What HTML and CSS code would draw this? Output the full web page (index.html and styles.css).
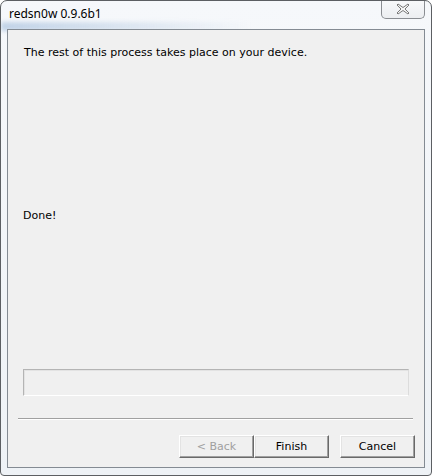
FILE: index.html
```html
<!DOCTYPE html>
<html>
<head>
<meta charset="utf-8">
<link rel="stylesheet" href="styles.css">
</head>
<body>
<div class="window">
  <div class="titlebar">
    <span class="title">redsn0w 0.9.6b1</span>
    <div class="close">
      <svg width="14" height="12" viewBox="0 0 14 12">
        <path d="M2 1 L7 4.5 L12 1 L13 2 L9 6 L13 10 L12 11 L7 7.5 L2 11 L1 10 L5 6 L1 2 Z" fill="#f4f4f4" stroke="#7a7a7a" stroke-width="1" stroke-linejoin="round"/>
      </svg>
    </div>
  </div>
  <div class="client">
    <p class="msg">The rest of this process takes place on your device.</p>
    <p class="done">Done!</p>
    <div class="progress"></div>
    <div class="sep"></div>
    <div class="buttons">
      <button class="btn disabled">&lt; Back</button>
      <button class="btn">Finish</button>
      <button class="btn cancel">Cancel</button>
    </div>
  </div>
</div>
</body>
</html>
```

FILE: styles.css
```css
html, body {
  margin: 0;
  padding: 0;
  background: #ffffff;
}
.window {
  width: 432px;
  height: 476px;
  box-sizing: border-box;
  border: 1px solid #5c5f63;
  border-radius: 7px 7px 4px 4px;
  background: linear-gradient(180deg, #f6f8fb 0%, #eef2f6 100%);
  display: flex;
  flex-direction: column;
  position: relative;
  overflow: hidden;
}
.window::before {
  content: "";
  position: absolute;
  left: 0;
  top: 21px;
  width: 250px;
  height: 9px;
  background: linear-gradient(90deg, rgba(150,180,215,0.55), rgba(170,195,225,0.0));
  filter: blur(2px);
}
.titlebar {
  height: 28px;
  display: flex;
  align-items: flex-start;
  position: relative;
}
.title {
  font-family: "Noto Sans", "Open Sans", sans-serif;
  font-size: 12px;
  color: #000;
  margin: 5px 0 0 8px;
  line-height: 16px;
}
.close {
  position: absolute;
  right: 6px;
  top: -1px;
  width: 44px;
  height: 19px;
  box-sizing: border-box;
  border: 1px solid #8a8d92;
  border-top: none;
  border-radius: 0 0 5px 5px;
  background: linear-gradient(180deg, #f8f9fb, #eceef1);
  display: flex;
  align-items: center;
  justify-content: center;
}
.client {
  flex: 1;
  margin: 0 6px 7px 6px;
  border: 1px solid #848b93;
  background: #f0f0f0;
  display: flex;
  flex-direction: column;
  font-family: Tahoma, "DejaVu Sans", "Liberation Sans", sans-serif;
  font-size: 11px;
  color: #000;
  position: relative;
  z-index: 1;
}
.msg {
  margin: 16px 0 0 16px;
  line-height: 13px;
}
.done {
  margin: 150px 0 0 15px;
  line-height: 13px;
}
.progress {
  margin: 147px 0 0 15px;
  width: 386px;
  height: 27px;
  box-sizing: border-box;
  border: 1px solid #b4b4b4;
  border-right-color: #dcdcdc;
  border-bottom-color: #ffffff;
  box-shadow: inset 1px 1px 0 #e3e3e3;
}
.sep {
  margin: 22px 0 0 10px;
  width: 395px;
  height: 1px;
  background: #a0a0a0;
  border-bottom: 1px solid #ffffff;
}
.buttons {
  display: flex;
  margin: 15px 0 0 171px;
}
.btn {
  width: 75px;
  height: 23px;
  box-sizing: border-box;
  font-family: Tahoma, "DejaVu Sans", "Liberation Sans", sans-serif;
  font-size: 11px;
  color: #000;
  background: #f0f0f0;
  border: 1px solid;
  border-color: #ffffff #696969 #696969 #ffffff;
  box-shadow: inset -1px -1px 0 #a0a0a0, inset 1px 1px 0 #e3e3e3;
  padding: 0;
  line-height: 19px;
}
.btn.disabled {
  color: #a0a0a0;
}
.btn.cancel {
  margin-left: 11px;
}
```
